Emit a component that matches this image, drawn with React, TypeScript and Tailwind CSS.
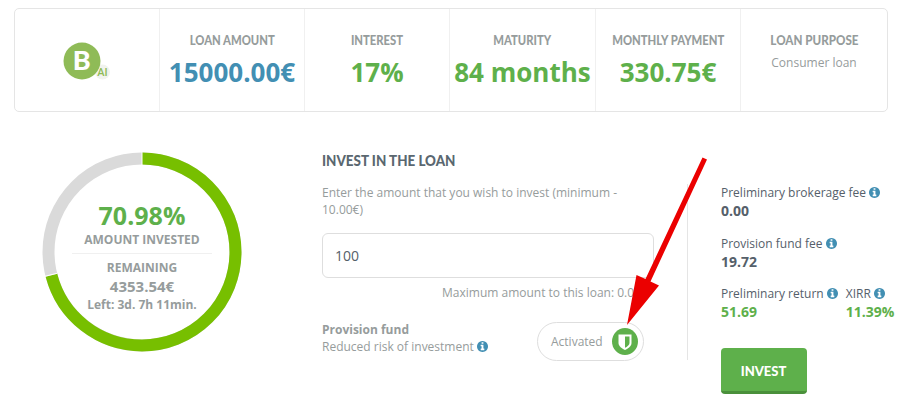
import React from 'react';

interface Stat {
  label: string;
  value: string;
  valueClass: string;
}

const stats: Stat[] = [
  { label: 'LOAN AMOUNT', value: '15000.00€', valueClass: 'text-[#428fb3]' },
  { label: 'INTEREST', value: '17%', valueClass: 'text-[#5eb04b]' },
  { label: 'MATURITY', value: '84 months', valueClass: 'text-[#5eb04b]' },
  { label: 'MONTHLY PAYMENT', value: '330.75€', valueClass: 'text-[#5eb04b]' },
];

export default function App() {
  return (
    <div className="relative h-[417px] w-[916px] overflow-hidden bg-white font-['Open_Sans',sans-serif] text-[12px] leading-[17px] text-[#969c9c]">
      <section className="mt-2 ml-3.5 grid h-[104px] w-[874px] grid-cols-[145px_145px_145px_146px_145px_1fr] rounded-[5px] border border-[#e5e5e5]">
        <div className="flex border-r border-[#f0f0f0] pt-[33px] pl-[48px]">
          <Logo />
        </div>
        {stats.map(stat => (
          <div key={stat.label} className="flex flex-col items-center border-r border-[#f0f0f0] pt-6">
            <Heading className="scale-x-[0.9] text-[12.5px] leading-4">{stat.label}</Heading>
            <div className={`mt-[5px] text-[26px] leading-[36px] font-bold whitespace-nowrap ${stat.valueClass}`}>{stat.value}</div>
          </div>
        ))}
        <div className="flex flex-col items-center pt-6">
          <Heading className="scale-x-[0.93] text-[12.5px] leading-4">LOAN PURPOSE</Heading>
          <div className="mt-[5px]">Consumer loan</div>
        </div>
      </section>

      <main className="flex pt-10">
        <Progress />

        <section className="ml-20 w-[332px]">
          <Heading className="origin-left scale-x-[0.925] text-[14.5px] leading-[18px] text-[#5a6770]">INVEST IN THE LOAN</Heading>
          <p className="mt-[14px] w-[310px]">Enter the amount that you wish to invest (minimum - 10.00€)</p>
          <div className="mt-[15px] flex h-[45px] items-center rounded-md border border-[#dedede] px-3 text-[14px] text-[#55606a]">100</div>
          <p className="mt-[6px] pr-[13px] text-right">Maximum amount to this loan: 0.00</p>
          <div className="mt-[21px] flex">
            <div className="-mt-px w-[215px] whitespace-nowrap">
              <div className="font-bold">Provision fund</div>
              <div>
                Reduced risk of investment <Info />
              </div>
            </div>
            <div className="flex h-[39px] w-[107px] items-center justify-between rounded-full border border-[#dedede] pr-[5px] pb-px pl-[13px]">
              <span>Activated</span>
              <Shield />
            </div>
          </div>
        </section>

        <section className="mt-[32px] ml-[33px] h-[176px] border-l border-[#e5e5e5] pl-[33px] text-[#55606a]">
          <Fee label="Preliminary brokerage fee" value="0.00" />
          <div className="mt-4">
            <Fee label="Provision fund fee" value="19.72" />
          </div>
          <div className="mt-[15px] flex gap-2 whitespace-nowrap">
            <Fee label="Preliminary return" value="51.69" valueClass="text-[#5eb04b]" />
            <Fee label="XIRR" value="11.39%" valueClass="text-[#5eb04b]" />
          </div>
          <button className="mt-[28px] flex h-[46px] w-[86px] items-center justify-center rounded-[4px] border-b-[3px] border-[#4a903b] bg-[#5eb04b] pt-0.5">
            <Heading className="scale-x-[0.93] text-[14px] leading-[18px] text-white">INVEST</Heading>
          </button>
        </section>
      </main>

      <svg className="absolute top-[155px] left-[620px]" width="90" height="172" viewBox="620 155 90 172" fill="#eb0000">
        <path d="M702.5 157.5L707 159.5L650.5 281.5L659 285.5L627 325L636.5 275L645.5 279Z" />
      </svg>
    </div>
  );
}

function Heading({ children, className = '' }: { children: React.ReactNode; className?: string }) {
  return <h3 className={`font-['Lato',sans-serif] font-black whitespace-nowrap ${className}`}>{children}</h3>;
}

function Fee({ label, value, valueClass = '' }: { label: string; value: string; valueClass?: string }) {
  return (
    <div>
      <div className="whitespace-nowrap">
        {label} <Info />
      </div>
      <div className={`mt-px text-[14px] leading-[17px] font-bold ${valueClass}`}>{value}</div>
    </div>
  );
}

function Info() {
  return (
    <svg className="inline-block align-[-1px]" width="11" height="11" viewBox="0 0 1536 1536" fill="#428fb3">
      <path d="M1024 1248v-160q0-14-9-23t-23-9h-96V544q0-14-9-23t-23-9H544q-14 0-23 9t-9 23v160q0 14 9 23t23 9h96v320h-96q-14 0-23 9t-9 23v160q0 14 9 23t23 9h448q14 0 23-9t9-23zM896 352V192q0-14-9-23t-23-9H672q-14 0-23 9t-9 23v160q0 14 9 23t23 9h192q14 0 23-9t9-23zm640 416q0 209-103 385.500T1153.500 1433 768 1536t-385.500-103T103 1153.500 0 768t103-385.500T382.500 103 768 0t385.500 103T1433 382.500 1536 768z" />
    </svg>
  );
}

function Shield() {
  return (
    <svg width="26" height="27" viewBox="0 0 26 27">
      <ellipse cx="13" cy="13.500" rx="13" ry="13.500" fill="#5eb04b" />
      <path d="M6.500 6.500H19.500V15C19.500 18.500 16 20.500 13 22C10 20.500 6.500 18.500 6.500 15Z" fill="#fff" />
      <path d="M13 8.500H17.500V15C17.500 17 15 18.800 13 19.800Z" fill="#5eb04b" />
    </svg>
  );
}

function Logo() {
  return (
    <svg width="50" height="38" viewBox="0 0 50 38">
      <circle cx="39.500" cy="30" r="7.500" fill="#f1f3ee" />
      <circle cx="19" cy="19" r="18.500" fill="#8fbb57" />
      <text x="18.800" y="28" textAnchor="middle" fontSize="27" fontWeight="900" fontFamily="Lato, sans-serif" fill="#fff">B</text>
      <text x="39.500" y="34" textAnchor="middle" fontSize="11" fontWeight="500" fontFamily="Roboto, sans-serif" fill="#8fbb57">AI</text>
    </svg>
  );
}

function Progress() {
  return (
    <div className="ml-[42px] grid h-[200px] w-[200px] place-items-center">
      <svg className="col-start-1 row-start-1" width="200" height="200" viewBox="0 0 200 200" fill="none" strokeWidth="12">
        <circle cx="100" cy="100" r="93.500" stroke="#dadada" />
        <circle cx="100" cy="100" r="93.500" stroke="#77bf00" pathLength="100" strokeDasharray="70.98 100" transform="rotate(-90 100 100)" />
        <path d="M100 0V13M2 124.500L15 121.300" stroke="#fff" strokeWidth="1" />
      </svg>
      <div className="col-start-1 row-start-1 flex w-[140px] flex-col items-center pt-[7px] font-bold whitespace-nowrap">
        <div className="text-[25px] leading-[32px] text-[#5eb04b]">70.98%</div>
        <div>AMOUNT INVESTED</div>
        <div className="mt-[5px] w-full border-t border-[#f0f0f0] pt-[5px] text-center">REMAINING</div>
        <div className="text-[15px] leading-[20px]">4353.54€</div>
        <div>Left: 3d. 7h 11min.</div>
      </div>
    </div>
  );
}
